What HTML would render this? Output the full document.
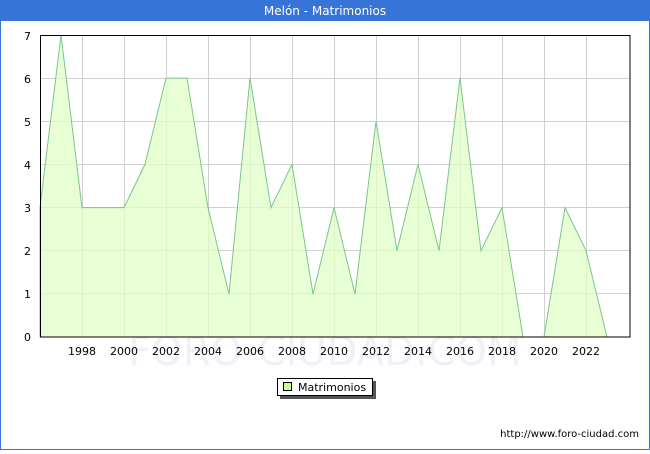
<!DOCTYPE html>
<html><head><style>
body{margin:0;width:650px;height:450px;overflow:hidden;background:#fff;font-family:"DejaVu Sans","Liberation Sans",sans-serif;}
</style></head><body>
<svg width="650" height="450" xmlns="http://www.w3.org/2000/svg" font-family="DejaVu Sans, Liberation Sans, sans-serif">
<rect x="0.5" y="0.5" width="649" height="449" fill="#fff" stroke="#3674d8"/>
<rect x="0" y="0" width="650" height="21" fill="#3674d8"/>
<text x="325" y="15" text-anchor="middle" fill="#fff" font-size="12">Melón - Matrimonios</text>
<text x="325" y="365" text-anchor="middle" fill="#f0f0f8" font-size="40">FORO-CIUDAD.COM</text>
<g stroke="#d0d0d0" stroke-width="1">
<line x1="40" x2="630" y1="293.5" y2="293.5"/><line x1="40" x2="630" y1="250.5" y2="250.5"/>
<line x1="40" x2="630" y1="207.5" y2="207.5"/><line x1="40" x2="630" y1="164.5" y2="164.5"/>
<line x1="40" x2="630" y1="121.5" y2="121.5"/><line x1="40" x2="630" y1="78.5" y2="78.5"/>
<line x1="82.5" x2="82.5" y1="35" y2="337"/><line x1="124.5" x2="124.5" y1="35" y2="337"/>
<line x1="166.5" x2="166.5" y1="35" y2="337"/><line x1="208.5" x2="208.5" y1="35" y2="337"/>
<line x1="250.5" x2="250.5" y1="35" y2="337"/><line x1="292.5" x2="292.5" y1="35" y2="337"/>
<line x1="334.5" x2="334.5" y1="35" y2="337"/><line x1="376.5" x2="376.5" y1="35" y2="337"/>
<line x1="418.5" x2="418.5" y1="35" y2="337"/><line x1="460.5" x2="460.5" y1="35" y2="337"/>
<line x1="502.5" x2="502.5" y1="35" y2="337"/><line x1="544.5" x2="544.5" y1="35" y2="337"/>
<line x1="586.5" x2="586.5" y1="35" y2="337"/>
</g>
<polygon fill="#e0ffc8" fill-opacity="0.75" stroke="#7ac68a" stroke-width="1" points="40,337 40,207.6 61,35 82,207.6 103,207.6 124,207.6 145,164.4 166,78.1 187,78.1 208,207.6 229,294 250,78.1 271,207.6 292,164.4 313,294 334,207.6 355,294 376,121.3 397,250.7 418,164.4 439,250.7 460,78.1 481,250.7 502,207.6 523,337 544,337 565,207.6 586,250.7 607,337"/>
<rect x="40.5" y="35.5" width="589.5" height="301.5" fill="none" stroke="#000"/>
<g font-size="11" fill="#000" text-anchor="end">
<text x="31" y="341">0</text><text x="31" y="298">1</text><text x="31" y="255">2</text>
<text x="31" y="212">3</text><text x="31" y="169">4</text><text x="31" y="126">5</text>
<text x="31" y="83">6</text><text x="31" y="40">7</text>
</g>
<g font-size="11" fill="#000" text-anchor="middle">
<text x="82" y="355">1998</text><text x="124" y="355">2000</text><text x="166" y="355">2002</text>
<text x="208" y="355">2004</text><text x="250" y="355">2006</text><text x="292" y="355">2008</text>
<text x="334" y="355">2010</text><text x="376" y="355">2012</text><text x="418" y="355">2014</text>
<text x="460" y="355">2016</text><text x="502" y="355">2018</text><text x="544" y="355">2020</text>
<text x="586" y="355">2022</text>
</g>
<rect x="280" y="381" width="96" height="18" fill="#555"/>
<rect x="277.5" y="378.5" width="95" height="17" fill="#fff" stroke="#000"/>
<rect x="283.5" y="382.5" width="8" height="8" fill="#ccff99" stroke="#000"/>
<text x="298" y="391" font-size="11">Matrimonios</text>
<text x="639" y="437" font-size="10" text-anchor="end">http://www.foro-ciudad.com</text>
</svg>
</body></html>
